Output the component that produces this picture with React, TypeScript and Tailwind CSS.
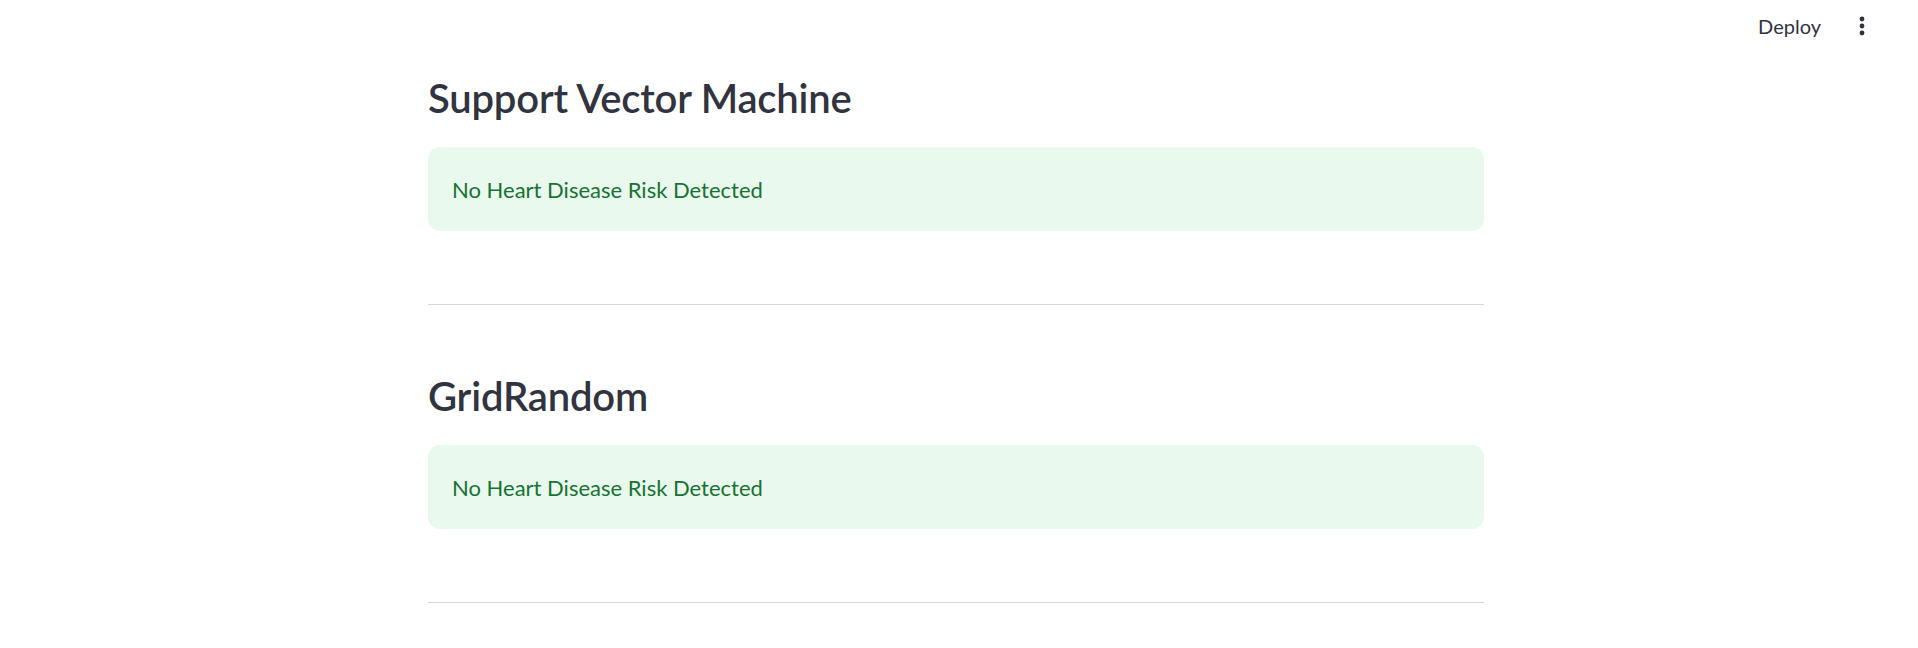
import React from 'react';

const font = { fontFamily: '"Lato", "Noto Sans", sans-serif' };

function Result({ title, last }: { title: string; last?: boolean }) {
  return (
    <section>
      <h3 className="text-[40px] leading-none font-semibold text-[#31333F] tracking-[-0.2px]">{title}</h3>
      <div className="mt-[29px] h-[84px] rounded-[12px] bg-[#e9f9ee] px-6 flex items-center text-[22px] text-[#177233]">
        No Heart Disease Risk Detected
      </div>
      <hr className={`mt-[73px] border-0 border-t-[1.5px] border-[#d6d6d9] ${last ? '' : 'mb-[71px]'}`} />
    </section>
  );
}

export default function App() {
  return (
    <div className="min-h-screen bg-white overflow-hidden" style={font}>
      <header className="h-[52px] flex items-center justify-end gap-[36px] pr-[51px]">
        <button className="text-[20px] text-[#31333F]">Deploy</button>
        <svg width="10" height="24" viewBox="0 0 10 24" className="text-[#31333F]">
          <circle cx="5" cy="5" r="2.4" fill="currentColor" />
          <circle cx="5" cy="12" r="2.4" fill="currentColor" />
          <circle cx="5" cy="19" r="2.4" fill="currentColor" />
        </svg>
      </header>
      <main className="w-[1056px] ml-[428px] pt-[26px]">
        <Result title="Support Vector Machine" />
        <Result title="GridRandom" last />
      </main>
    </div>
  );
}
